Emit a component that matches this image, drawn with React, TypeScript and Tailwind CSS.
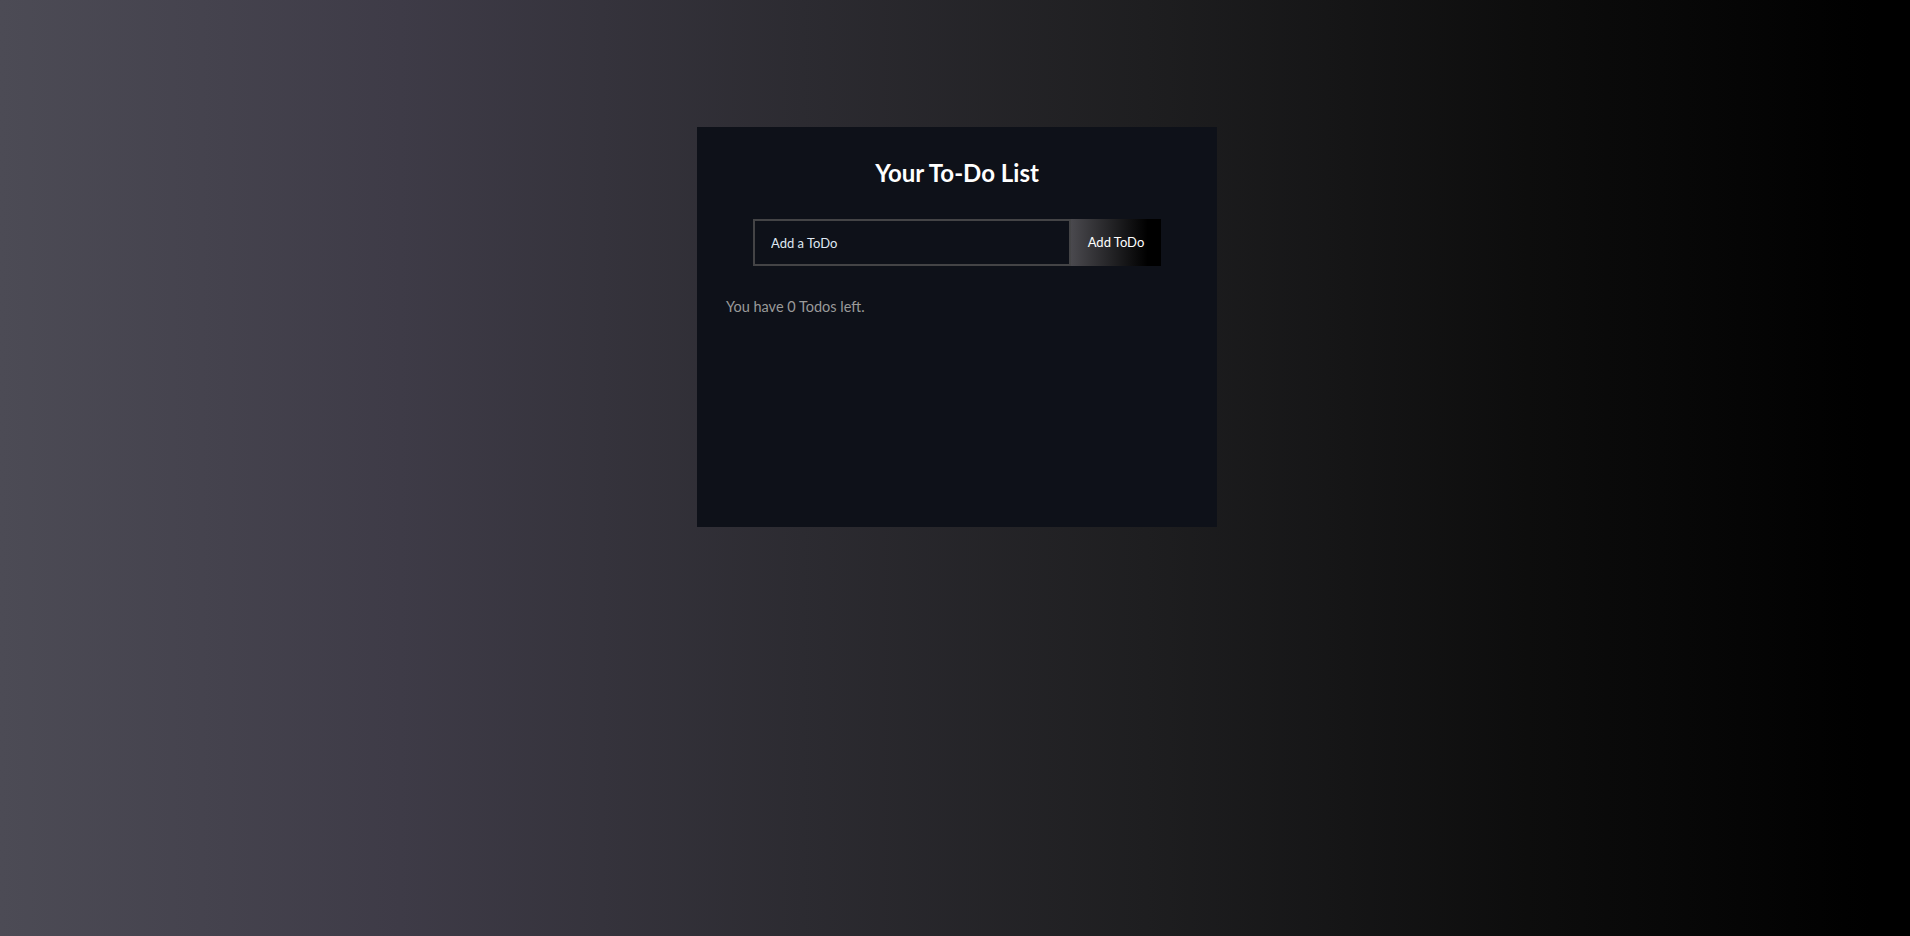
export default function App() {
  return (
    <div className="min-h-screen w-full bg-[linear-gradient(to_right,#4c4b55_0%,#3e3b47_21%,#2c2b31_42%,#1e1e20_60%,#0d0d0d_80%,#000_98%)] flex justify-center pt-[127px] pl-[4px] font-['Trebuchet_MS',Lato,'Open_Sans',sans-serif]">
      <div className="w-[520px] h-[400px] bg-[#0e1119] flex flex-col pt-[30px]">
        {/* Title */}
        <h1 className="text-center text-white font-bold text-[24px] leading-[32px]">Your To-Do List</h1>

        {/* Input row */}
        <div className="mt-[30px] flex justify-center">
          <input
            type="text"
            placeholder="Add a ToDo"
            className="w-[318px] h-[47px] border-2 border-[#444446] bg-transparent px-4 text-[13px] text-[#dfe8f2] placeholder:text-[#dfe8f2] outline-none"
          />
          <button
            type="button"
            className="w-[90px] h-[47px] bg-[linear-gradient(to_right,#4a494e,#1a1a1c_55%,#000_85%)] text-white text-[13px]"
          >
            Add ToDo
          </button>
        </div>

        {/* Count */}
        <p className="mt-[31px] px-[29px] text-[14.5px] leading-[20px] text-[#9a9a9a]">You have 0 Todos left.</p>
      </div>
    </div>
  );
}
